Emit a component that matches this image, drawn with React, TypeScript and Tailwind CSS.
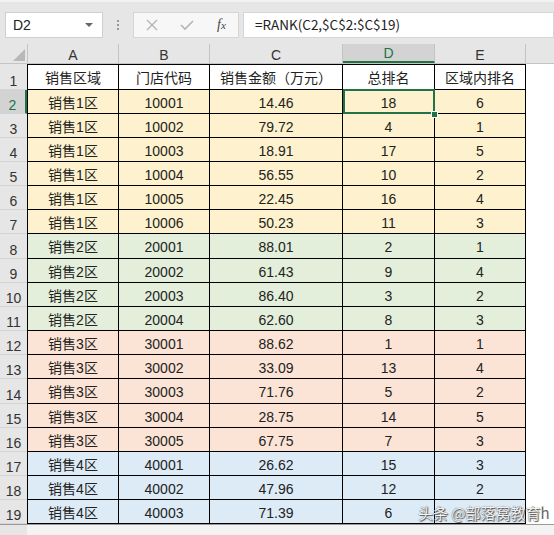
import React from 'react'

const rows: string[][] = [
  ['销售1区', '10001', '14.46', '18', '6'],
  ['销售1区', '10002', '79.72', '4', '1'],
  ['销售1区', '10003', '18.91', '17', '5'],
  ['销售1区', '10004', '56.55', '10', '2'],
  ['销售1区', '10005', '22.45', '16', '4'],
  ['销售1区', '10006', '50.23', '11', '3'],
  ['销售2区', '20001', '88.01', '2', '1'],
  ['销售2区', '20002', '61.43', '9', '4'],
  ['销售2区', '20003', '86.40', '3', '2'],
  ['销售2区', '20004', '62.60', '8', '3'],
  ['销售3区', '30001', '88.62', '1', '1'],
  ['销售3区', '30002', '33.09', '13', '4'],
  ['销售3区', '30003', '71.76', '5', '2'],
  ['销售3区', '30004', '28.75', '14', '5'],
  ['销售3区', '30005', '67.75', '7', '3'],
  ['销售4区', '40001', '26.62', '15', '3'],
  ['销售4区', '40002', '47.96', '12', '2'],
  ['销售4区', '40003', '71.39', '6', ''],
]

const fill = (i: number) =>
  i < 6 ? 'bg-[#fdf2cd]' : i < 10 ? 'bg-[#e3efdb]' : i < 15 ? 'bg-[#fbe4d6]' : 'bg-[#ddebf7]'

const tall = [6, 12]

const cell = 'flex items-center justify-center border-r border-black pt-[2px]'

function Toolbar() {
  return (
    <div className="h-[44px] bg-[#e6e6e6] border-t-[2px] border-[#f2f2f2] flex items-start pt-[10px] pl-[5px]">
      <div className="w-[98px] h-[26px] bg-white border border-[#d0d0d0] flex items-center justify-between px-[7px]">
        <span className="text-[14px] text-[#222]">D2</span>
        <span className="w-0 h-0 border-l-[4px] border-r-[4px] border-t-[4px] border-l-transparent border-r-transparent border-t-[#666] mr-[2px]" />
      </div>
      <div className="w-[30px] h-[26px] flex flex-col items-center justify-center gap-[2px]">
        <span className="w-[2px] h-[2px] bg-[#9a9a9a]" />
        <span className="w-[2px] h-[2px] bg-[#9a9a9a]" />
        <span className="w-[2px] h-[2px] bg-[#9a9a9a]" />
      </div>
      <div className="w-[106px] h-[26px] bg-[#f7f7f7] border border-[#d6d6d6] flex items-center">
        <svg className="ml-[12px]" width="12" height="12" viewBox="0 0 12 12">
          <path d="M1 1 L11 11 M11 1 L1 11" stroke="#b4b4b4" strokeWidth="1.3" fill="none" />
        </svg>
        <svg className="ml-[22px]" width="14" height="12" viewBox="0 0 14 12">
          <path d="M1 6 L5 10 L13 2" stroke="#b4b4b4" strokeWidth="1.6" fill="none" />
        </svg>
        <span className="ml-[23px] text-[14px] italic text-[#444] font-['Liberation_Serif',serif]">
          f<span className="text-[11px]">x</span>
        </span>
      </div>
      <div className="ml-[4px] flex-1 h-[26px] bg-white border border-[#d6d6d6] flex items-center pl-[11px]">
        <span className="text-[13.5px] text-[#222] font-['Noto_Sans_CJK_SC',sans-serif] leading-none">
          =RANK(C2,$C$2:$C$19)
        </span>
      </div>
    </div>
  )
}

function HeaderRow() {
  const hd = 'flex items-end justify-center border-r border-[#c4c4c4] text-[14px] text-[#333] pb-[1px]'
  return (
    <div className="flex h-[20px] bg-[#e6e6e6] border-b border-[#c4c4c4]">
      <div className="w-[27px] flex items-end justify-end pr-[2px] pb-[2px]">
        <svg width="12" height="12" viewBox="0 0 12 12">
          <path d="M12 0 L12 12 L0 12 Z" fill="#b8b8b8" />
        </svg>
      </div>
      <div className={`${hd} w-[92px] border-l`}>A</div>
      <div className={`${hd} w-[91px]`}>B</div>
      <div className={`${hd} w-[133px]`}>C</div>
      <div className={`${hd} w-[92px] bg-[#d3d3d3] text-[#217346] border-b-2 border-b-[#217346]`}>D</div>
      <div className={`${hd} w-[91px]`}>E</div>
      <div className="flex-1" />
    </div>
  )
}

function Row({
  n,
  vals,
  bg,
  h,
  first,
}: {
  n: number
  vals: string[]
  bg: string
  h: string
  first?: boolean
}) {
  const sel = n === 2
  return (
    <div className={`flex ${h} ${sel ? 'relative z-10' : ''}`}>
      <div
        className={`w-[27px] flex items-end justify-center pb-[1px] text-[14px] border-b border-[#d4d4d4] ${
          sel ? 'bg-[#d3d3d3] text-[#217346] border-r-2 border-r-[#217346]' : 'bg-[#e6e6e6] text-[#333]'
        }`}
      >
        {n}
      </div>
      <div className={`flex border-b border-black ${bg} ${first ? 'border-t' : ''}`}>
        <div className={`${cell} w-[92px] border-l`}>{vals[0]}</div>
        <div className={`${cell} w-[91px]`}>{vals[1]}</div>
        <div className={`${cell} w-[133px]`}>{vals[2]}</div>
        <div className={`${cell} w-[92px] relative`}>
          {vals[3]}
          {sel && (
            <>
              <div className="absolute left-0 -top-[1px] -right-[1px] -bottom-[1px] border-2 border-[#217346]" />
              <div className="absolute -right-[4px] -bottom-[5px] w-[7px] h-[7px] bg-[#217346] border border-white" />
            </>
          )}
        </div>
        <div className={`${cell} w-[91px]`}>{vals[4]}</div>
      </div>
      <div className="flex-1 bg-white" />
    </div>
  )
}

export default function App() {
  return (
    <div className="w-[554px] h-[535px] overflow-hidden bg-white relative font-['Liberation_Sans','Noto_Sans_CJK_SC',sans-serif] text-[14px] text-[#222] leading-none">
      <Toolbar />
      <HeaderRow />
      <Row
        n={1}
        vals={['销售区域', '门店代码', '销售金额（万元）', '总排名', '区域内排名']}
        bg="bg-white"
        h="h-[26px]"
        first
      />
      {rows.map((r, i) => (
        <Row
          key={i}
          n={i + 2}
          vals={r}
          bg={fill(i)}
          h={tall.includes(i) ? 'h-[25px]' : 'h-[24px]'}
        />
      ))}
      <div className="flex h-[12px] border-t border-[#9a9a9a]">
        <div className="w-[27px] bg-[#e6e6e6]" />
        <div className="flex-1 bg-[#f3f3f3]" />
      </div>
      <div className="absolute left-[418px] top-[505px] text-[15px] font-['Noto_Sans_CJK_SC',sans-serif] text-[#f2f2f2] [text-shadow:0_0_1px_#333,1px_1px_1px_#555] whitespace-nowrap">
        头条 @部落窝教育<span className="text-[#666] [text-shadow:none]">h</span>
      </div>
    </div>
  )
}
